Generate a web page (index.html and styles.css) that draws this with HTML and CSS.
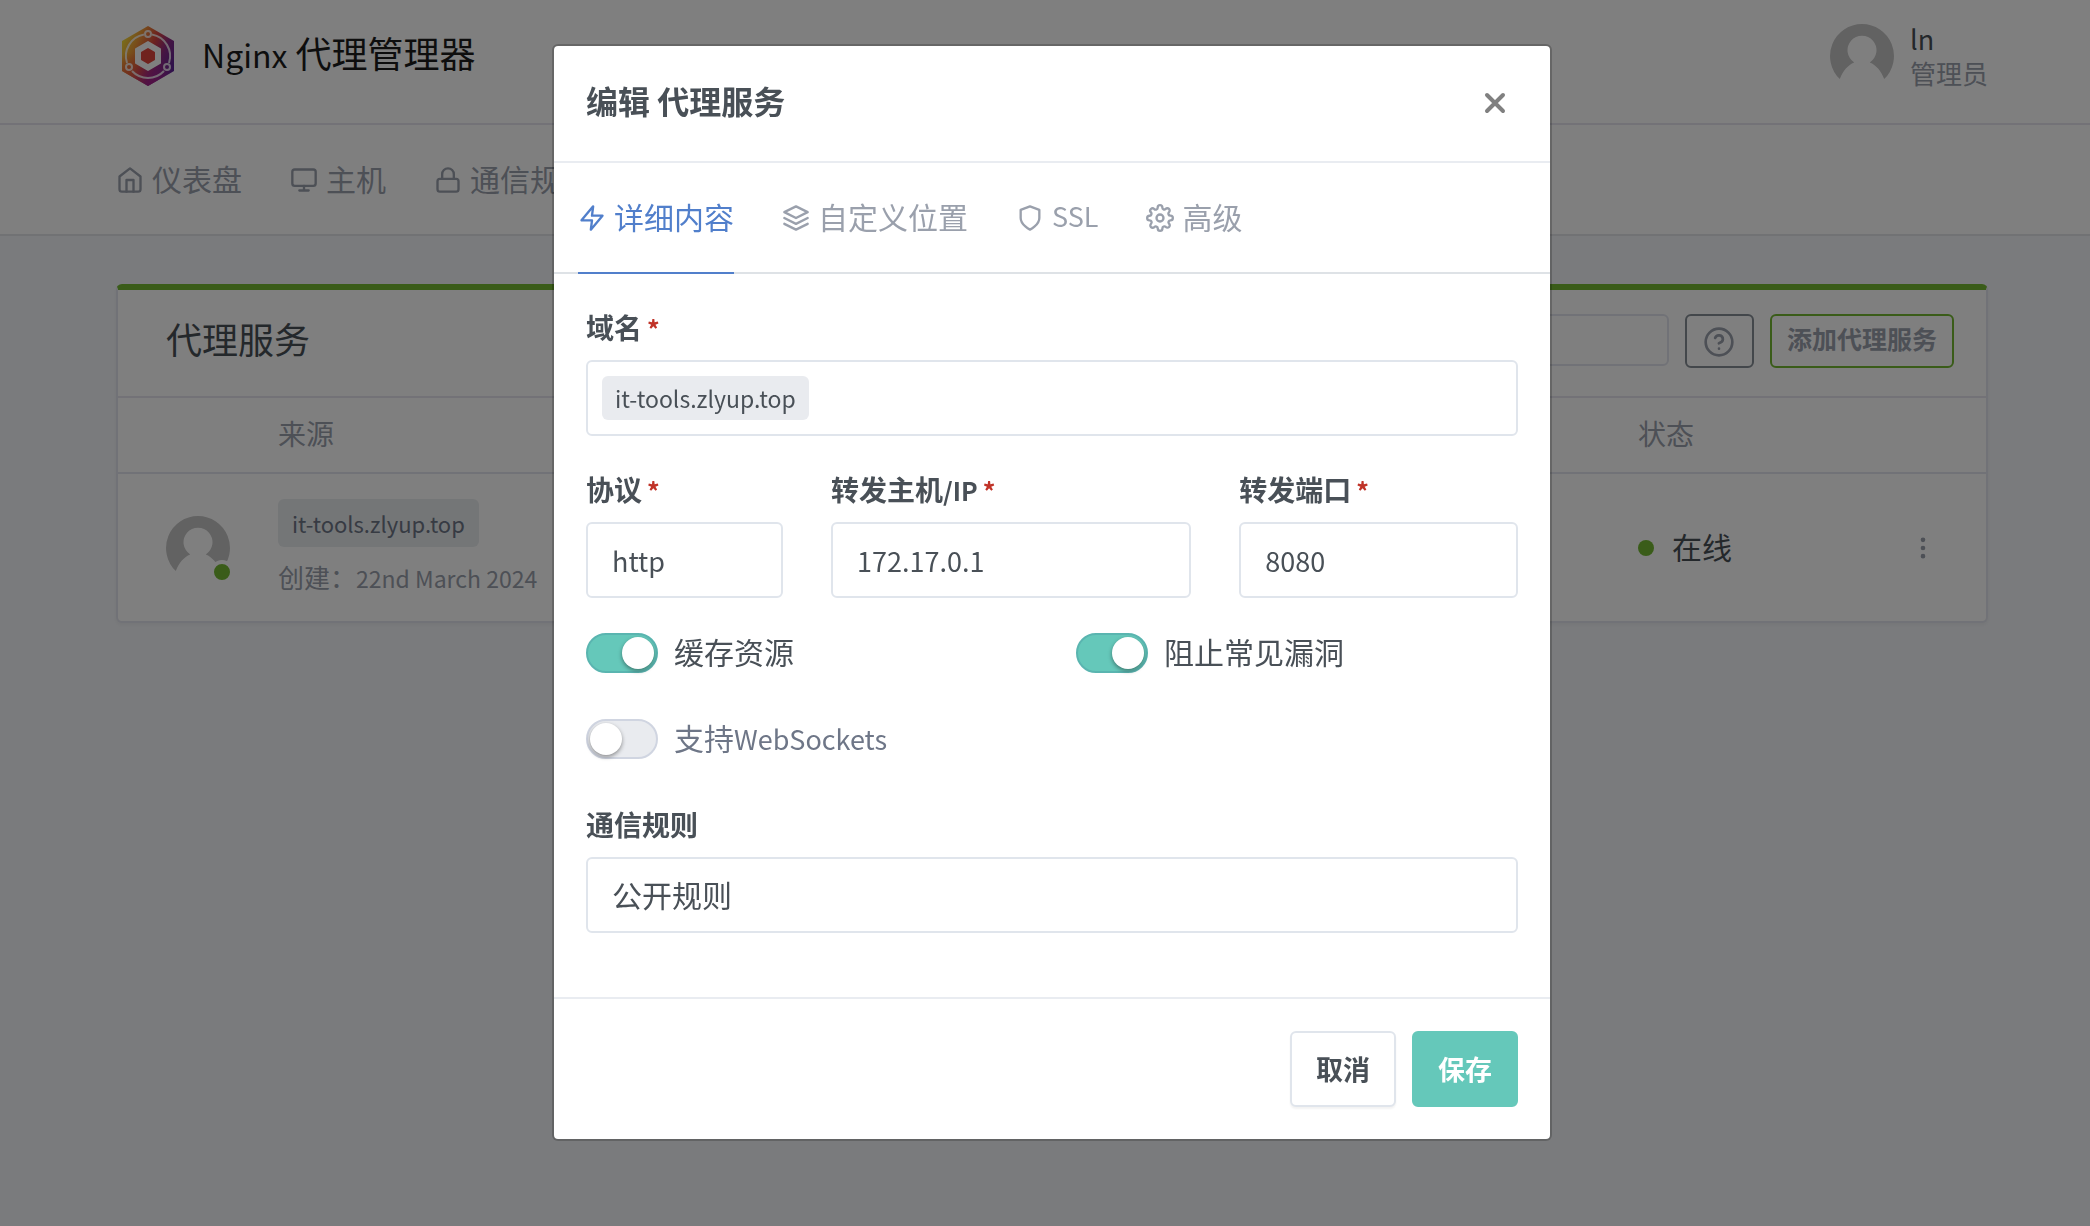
FILE: index.html
```html
<!DOCTYPE html>
<html lang="zh-CN">
<head>
<meta charset="utf-8">
<meta name="viewport" content="width=device-width, initial-scale=1">
<title>Nginx 代理管理器</title>
<link rel="stylesheet" href="styles.css">
</head>
<body>
<header class="header">
  <div class="container header-inner">
    <a class="brand" href="#">
      <svg class="logo" viewBox="0 0 52 60" aria-hidden="true">
        <defs>
          <linearGradient id="hex" x1="0" y1="0.2" x2="1" y2="0.75">
            <stop offset="0" stop-color="#f3e23a"/>
            <stop offset="0.25" stop-color="#f09a35"/>
            <stop offset="0.5" stop-color="#d9433f"/>
            <stop offset="0.72" stop-color="#8b2a86"/>
            <stop offset="1" stop-color="#54249a"/>
          </linearGradient>
          <radialGradient id="low" cx="0.6" cy="1" r="0.5">
            <stop offset="0" stop-color="#a8208c"/>
            <stop offset="1" stop-color="#a8208c" stop-opacity="0"/>
          </radialGradient>
          <radialGradient id="left" cx="0.15" cy="0.8" r="0.35">
            <stop offset="0" stop-color="#e5603a"/>
            <stop offset="1" stop-color="#e5603a" stop-opacity="0"/>
          </radialGradient>
        </defs>
        <path d="M26 0 52 15V45L26 60 0 45V15Z" fill="url(#hex)"/>
        <path d="M26 0 52 15V45L26 60 0 45V15Z" fill="url(#left)"/>
        <path d="M26 0 52 15V45L26 60 0 45V15Z" fill="url(#low)"/>
        <g fill="none" stroke="#fff" stroke-opacity="0.8" stroke-width="2">
          <path d="M22 8.500A22 22 0 0 0 5 37M30 8.500A22 22 0 0 1 47 37M10 45A22 22 0 0 0 42 45"/>
          <circle cx="26" cy="8" r="3"/>
          <circle cx="7" cy="41" r="3"/>
          <circle cx="45" cy="41" r="3"/>
        </g>
        <path d="M26 16 38 23V37L26 44 14 37V23Z" fill="#fff" stroke="#fff" stroke-width="2" stroke-linejoin="round"/>
        <path d="M26 23 32 26.500V33.500L26 37 20 33.500V26.500Z" fill="#e0453c" stroke="#e0453c" stroke-width="2" stroke-linejoin="round"/>
      </svg>
      <span class="brand-name"><span class="latin">Nginx</span> 代理管理器</span>
    </a>
    <a class="user" href="#">
      <svg class="avatar" viewBox="0 0 64 64" aria-hidden="true"><use href="#person"/></svg>
      <span class="user-text"><span class="user-name">ln</span><span class="user-role">管理员</span></span>
    </a>
  </div>
</header>

<nav class="nav">
  <div class="container nav-inner">
    <a class="nav-link" href="#"><svg class="icon" viewBox="0 0 24 24"><path d="m3 9 9-7 9 7v11a2 2 0 0 1-2 2H5a2 2 0 0 1-2-2z"/><path d="M9 22V12h6v10"/></svg>仪表盘</a>
    <a class="nav-link" href="#"><svg class="icon" viewBox="0 0 24 24"><rect x="2" y="3" width="20" height="14" rx="2"/><path d="M8 21h8M12 17v4"/></svg>主机</a>
    <a class="nav-link" href="#"><svg class="icon" viewBox="0 0 24 24"><rect x="3" y="11" width="18" height="11" rx="2"/><path d="M7 11V7a5 5 0 0 1 10 0v4"/></svg>通信规则</a>
  </div>
</nav>

<main class="container main">
  <section class="card">
    <div class="card-header">
      <h1 class="card-title">代理服务</h1>
      <div class="card-actions">
        <input class="search" type="search" aria-label="搜索">
        <button class="btn-outline btn-help" type="button" aria-label="帮助"><svg class="icon icon-help" viewBox="0 0 24 24"><circle cx="12" cy="12" r="10"/><path d="M9.090 9a3 3 0 0 1 5.830 1c0 2-3 3-3 3M12 17h.01"/></svg></button>
        <button class="btn-outline btn-add" type="button">添加代理服务</button>
      </div>
    </div>
    <table class="hosts">
      <thead>
        <tr><th class="col-avatar"></th><th>来源</th><th class="col-status">状态</th><th class="col-menu"></th></tr>
      </thead>
      <tbody>
        <tr>
          <td class="col-avatar">
            <div class="avatar-wrap">
              <svg class="avatar" viewBox="0 0 64 64" aria-hidden="true"><use href="#person"/></svg>
              <span class="avatar-status"></span>
            </div>
          </td>
          <td>
            <span class="tag tag-host">it-tools.zlyup.top</span>
            <div class="created">创建：<span class="latin">22nd March 2024</span></div>
          </td>
          <td class="col-status"><span class="status"><span class="dot"></span><span class="status-text">在线</span></span></td>
          <td class="col-menu"><button class="menu" type="button" aria-label="更多"><svg class="icon icon-more" viewBox="0 0 24 24"><circle cx="12" cy="12" r="1"/><circle cx="12" cy="5" r="1"/><circle cx="12" cy="19" r="1"/></svg></button></td>
        </tr>
      </tbody>
    </table>
  </section>
</main>

<div class="overlay">
  <form class="modal" role="dialog" aria-labelledby="modal-title">
    <div class="modal-header">
      <h2 class="modal-title" id="modal-title">编辑 代理服务</h2>
      <button class="close" type="button" aria-label="关闭"><svg class="icon-close" viewBox="0 0 22 22"><path d="m3 3 16 16M19 3 3 19"/></svg></button>
    </div>
    <div class="tabs">
      <a class="tab active" href="#"><svg class="icon" viewBox="0 0 24 24"><path d="M13 2 3 14h9l-1 8 10-12h-9z"/></svg>详细内容</a>
      <a class="tab" href="#"><svg class="icon" viewBox="0 0 24 24"><path d="M12 2 2 7l10 5 10-5zM2 17l10 5 10-5M2 12l10 5 10-5"/></svg>自定义位置</a>
      <a class="tab" href="#"><svg class="icon" viewBox="0 0 24 24"><path d="M12 22s8-4 8-10V5l-8-3-8 3v7c0 6 8 10 8 10z"/></svg><span class="latin">SSL</span></a>
      <a class="tab" href="#"><svg class="icon" viewBox="0 0 24 24"><circle cx="12" cy="12" r="3"/><path d="M19.4 15a1.65 1.65 0 0 0 .33 1.820l.06.06a2 2 0 1 1-2.830 2.830l-.06-.06a1.650 1.650 0 0 0-1.820-.33 1.650 1.650 0 0 0-1 1.510V21a2 2 0 0 1-4 0v-.09A1.650 1.650 0 0 0 9 19.400a1.650 1.650 0 0 0-1.820.33l-.06.06a2 2 0 1 1-2.830-2.830l.06-.06a1.650 1.650 0 0 0 .33-1.820 1.650 1.650 0 0 0-1.510-1H3a2 2 0 0 1 0-4h.09A1.650 1.650 0 0 0 4.600 9a1.650 1.650 0 0 0-.33-1.820l-.06-.06a2 2 0 1 1 2.830-2.830l.06.06a1.650 1.650 0 0 0 1.820.33H9a1.650 1.650 0 0 0 1-1.510V3a2 2 0 0 1 4 0v.09a1.650 1.650 0 0 0 1 1.510 1.650 1.650 0 0 0 1.820-.33l.06-.06a2 2 0 1 1 2.830 2.830l-.06.06a1.650 1.650 0 0 0-.33 1.820V9a1.650 1.650 0 0 0 1.510 1H21a2 2 0 0 1 0 4h-.09a1.650 1.650 0 0 0-1.510 1z"/></svg>高级</a>
    </div>
    <div class="modal-body">
      <div class="group">
        <label class="label" for="domains">域名<span class="required">*</span></label>
        <div class="control tags-input">
          <span class="tag tag-domain">it-tools.zlyup.top</span>
          <input class="tags-field" id="domains" type="text">
        </div>
      </div>
      <div class="row row-forward">
        <div class="group">
          <label class="label" for="scheme">协议<span class="required">*</span></label>
          <select class="control" id="scheme"><option>http</option><option>https</option></select>
        </div>
        <div class="group">
          <label class="label" for="host">转发主机<span class="latin">/IP</span><span class="required">*</span></label>
          <input class="control" id="host" type="text" value="172.17.0.1">
        </div>
        <div class="group">
          <label class="label" for="port">转发端口<span class="required">*</span></label>
          <input class="control" id="port" type="text" value="8080">
        </div>
      </div>
      <div class="row row-switches">
        <label class="switch-label"><input class="switch" type="checkbox" checked><span class="switch-text">缓存资源</span></label>
        <label class="switch-label"><input class="switch" type="checkbox" checked><span class="switch-text">阻止常见漏洞</span></label>
        <label class="switch-label"><input class="switch" type="checkbox"><span class="switch-text">支持<span class="latin">WebSockets</span></span></label>
      </div>
      <div class="group">
        <label class="label" for="access">通信规则</label>
        <select class="control control-cjk" id="access"><option>公开规则</option></select>
      </div>
    </div>
    <div class="modal-footer">
      <button class="btn btn-cancel" type="button">取消</button>
      <button class="btn btn-save" type="submit">保存</button>
    </div>
  </form>
</div>

<svg class="defs" aria-hidden="true">
  <symbol id="person" viewBox="0 0 64 64">
    <path fill="#c4c4c4" d="M32 0A32 32 0 0 0 9.800 55C13 46.500 18 41 24.200 38.400A14.500 14.500 0 1 1 39.800 38.400C46 41 51 46.500 54.200 55A32 32 0 0 0 32 0z"/>
  </symbol>
</svg>
</body>
</html>
```
FILE: styles.css
```css
* {
  box-sizing: border-box;
}

body {
  margin: 0;
  min-height: 100vh;
  overflow: hidden;
  background: #f5f7fb;
  color: #495057;
  font: 400 30px/44px "Noto Sans CJK SC", sans-serif;
}

a {
  color: inherit;
  text-decoration: none;
}

button,
input,
select {
  font-family: inherit;
  color: inherit;
}

.latin {
  font-size: 27px;
  line-height: 1;
}

.defs {
  position: absolute;
  width: 0;
  height: 0;
}

.container {
  padding: 0 102px 0 116px;
}

.icon {
  width: 28px;
  height: 28px;
  flex: none;
  fill: none;
  stroke: currentColor;
  stroke-width: 2;
  stroke-linecap: round;
  stroke-linejoin: round;
}

/* Header */
.header {
  background: #fff;
  border-bottom: 2px solid #e6e5ef;
}

.header-inner {
  display: flex;
  justify-content: space-between;
  align-items: center;
  height: 123px;
}

.brand {
  display: flex;
  align-items: center;
  gap: 28px;
  padding-left: 6px;
  margin-top: -12px;
}

.logo {
  width: 52px;
  height: 60px;
}

.brand-name {
  padding-bottom: 8px;
  color: #1c1c1c;
  font-size: 36px;
}

.brand-name .latin {
  font-size: 32px;
}

.user {
  display: flex;
  align-items: center;
  gap: 16px;
  margin-top: -12px;
}

.avatar {
  display: block;
  width: 64px;
  height: 64px;
}

.user-text {
  display: flex;
  flex-direction: column;
  line-height: 34px;
}

.user-name {
  font-size: 27px;
}

.user-role {
  color: #9aa0ac;
  font-size: 26px;
}

/* Navigation */
.nav {
  background: #fff;
  border-bottom: 2px solid #e3e4e8;
}

.nav-inner,
.tabs {
  display: flex;
  gap: 48px;
}

.nav-link,
.tab {
  display: flex;
  align-items: center;
  gap: 8px;
  height: 109px;
  padding-bottom: 4px;
  color: #9aa0ac;
  white-space: nowrap;
}

.nav-link .icon,
.tab .icon {
  margin-top: 4px;
}

/* Card */
.main {
  padding-top: 48px;
}

.card {
  background: #fff;
  border: 2px solid #e3e5ee;
  border-top: 6px solid #74b933;
  border-radius: 6px;
  box-shadow: 0 2px 4px rgba(0, 0, 0, 0.05);
}

.card-header {
  display: flex;
  justify-content: space-between;
  align-items: flex-start;
  height: 108px;
  padding: 24px 32px 0 48px;
  border-bottom: 2px solid #e6e5ef;
}

.card-title {
  margin: 0;
  padding-top: 2px;
  font-size: 36px;
  font-weight: 400;
}

.card-actions {
  display: flex;
  gap: 16px;
}

.search {
  width: 320px;
  height: 52px;
  border: 2px solid #e3e5ee;
  border-radius: 6px;
  background: #fff;
}

.btn-outline {
  display: flex;
  align-items: center;
  justify-content: center;
  height: 54px;
  padding: 0 15px;
  background: none;
  border: 2px solid #868e96;
  border-radius: 6px;
  color: #9aa0ac;
  font-size: 25px;
  font-weight: 600;
  line-height: 36px;
}

.btn-help {
  width: 69px;
  padding: 2px 0 0;
}

.icon-help {
  width: 32px;
  height: 32px;
}

.btn-add {
  border-color: #74b933;
  padding-bottom: 6px;
}

.hosts {
  width: 100%;
  border-collapse: separate;
  border-spacing: 0;
}

.hosts th {
  height: 76px;
  padding: 0 24px 4px;
  border-bottom: 2px solid #e3e5ee;
  color: #9aa0ac;
  font-size: 28px;
  font-weight: 400;
  text-align: left;
}

.hosts td {
  height: 147px;
  padding: 0 24px;
}

.hosts .col-avatar {
  width: 136px;
  padding: 0 0 0 48px;
}

.hosts .col-status {
  width: 268px;
}

.hosts .col-menu {
  width: 104px;
  padding: 0 0 0 27px;
}

.avatar-wrap {
  position: relative;
  width: 64px;
}

.avatar-status {
  position: absolute;
  right: -4px;
  bottom: -4px;
  width: 24px;
  height: 24px;
  border: 4px solid #fff;
  border-radius: 50%;
  background: #74b933;
}

.tag {
  display: inline-block;
  border-radius: 6px;
  white-space: nowrap;
}

.tag-host {
  padding: 0 14px;
  background: #e9ecef;
  color: #6e7687;
  font-size: 22px;
  line-height: 48px;
  vertical-align: top;
}

.created {
  padding-top: 10px;
  color: #9aa0ac;
  font-size: 26px;
  line-height: 40px;
}

.created .latin {
  font-size: 23px;
}

.status {
  display: flex;
  align-items: center;
  gap: 18px;
}

.status-text {
  padding-bottom: 4px;
}

.dot {
  width: 16px;
  height: 16px;
  border-radius: 50%;
  background: #74b933;
}

.menu {
  display: block;
  padding: 0;
  border: 0;
  background: none;
  color: #9aa0ac;
}

.icon-more {
  display: block;
}

/* Modal */
.overlay {
  position: fixed;
  inset: 0;
  padding: 44px 0 44px 14px;
  overflow: hidden;
  background: rgba(0, 0, 0, 0.5);
}

.modal {
  max-width: 1000px;
  margin: 0 auto;
  background: #fff;
  background-clip: padding-box;
  border: 2px solid rgba(0, 0, 0, 0.2);
  border-radius: 6px;
}

.modal-header {
  display: flex;
  justify-content: space-between;
  align-items: center;
  height: 117px;
  padding: 0 44px 2px 32px;
  border-bottom: 2px solid #e9ecf1;
}

.modal-title {
  margin: 0;
  padding-bottom: 6px;
  font-size: 32px;
  font-weight: 600;
}

.close {
  padding: 0;
  border: 0;
  background: none;
}

.icon-close {
  display: block;
  width: 22px;
  height: 22px;
  stroke: #808080;
  stroke-width: 4;
  stroke-linecap: round;
}

.tabs {
  padding: 0 24px;
  border-bottom: 2px solid #dee2e6;
}

.tab {
  height: 111px;
  margin-bottom: -2px;
  border-bottom: 2px solid transparent;
}

.tab.active {
  border-color: #517fcb;
  color: #517fcb;
}

.modal-body {
  padding: 32px;
}

.group {
  margin-bottom: 32px;
}

.label {
  display: block;
  margin-bottom: 12px;
  font-size: 28px;
  font-weight: 600;
  line-height: 42px;
}

.label .latin {
  font-size: 25px;
}

.required {
  margin-left: 5px;
  color: #c03328;
  font-size: 25px;
  line-height: 1;
}

.control {
  display: block;
  width: 100%;
  height: 76px;
  padding: 0 24px;
  appearance: none;
  background: #fff;
  border: 2px solid #e0e5ec;
  border-radius: 6px;
  font-size: 27px;
}

.control-cjk {
  padding-bottom: 2px;
  font-size: 30px;
}

.tags-input {
  display: flex;
  align-items: center;
  padding: 0 14px;
}

.tag-domain {
  padding: 0 13px;
  background: #e9ebef;
  font-size: 23px;
  line-height: 44px;
}

.tags-field {
  flex: 1;
  min-width: 0;
  border: 0;
  outline: 0;
  background: none;
  font-size: 23px;
}

.row {
  display: grid;
  margin: 0 -24px;
}

.row > * {
  min-width: 0;
  padding: 0 24px;
}

.row-forward {
  grid-template-columns: 3fr 5fr 4fr;
}

.row-switches {
  grid-template-columns: 1fr 1fr;
  row-gap: 40px;
  margin-bottom: 41px;
}

.switch-label {
  display: flex;
  align-items: center;
  gap: 16px;
  height: 46px;
}

.switch {
  width: 72px;
  height: 40px;
  margin: 0;
  padding: 2px;
  appearance: none;
  background: #e9ebef;
  border: 2px solid #d0d5e1;
  border-radius: 20px;
}

.switch::before {
  content: "";
  display: block;
  width: 32px;
  height: 32px;
  border-radius: 50%;
  background: #fff;
  box-shadow: 0 2px 4px rgba(0, 0, 0, 0.4);
}

.switch:checked {
  background: #65c8ba;
  border-color: #5ab5b0;
}

.switch:checked::before {
  margin-left: 32px;
}

.switch-text {
  padding-bottom: 4px;
}

.switch:not(:checked) + .switch-text {
  color: #6e7687;
}

.modal-footer {
  display: flex;
  justify-content: flex-end;
  gap: 16px;
  padding: 32px;
  border-top: 2px solid #e9ecf1;
}

.btn {
  height: 76px;
  padding: 0 24px 2px;
  border: 2px solid #e0e5ec;
  border-radius: 6px;
  background: #fff;
  font-size: 27px;
  font-weight: 600;
}

.btn-cancel {
  box-shadow: 0 2px 2px rgba(0, 0, 0, 0.05);
}

.btn-save {
  border-color: #65c8ba;
  background: #65c8ba;
  color: #fff;
}
```
